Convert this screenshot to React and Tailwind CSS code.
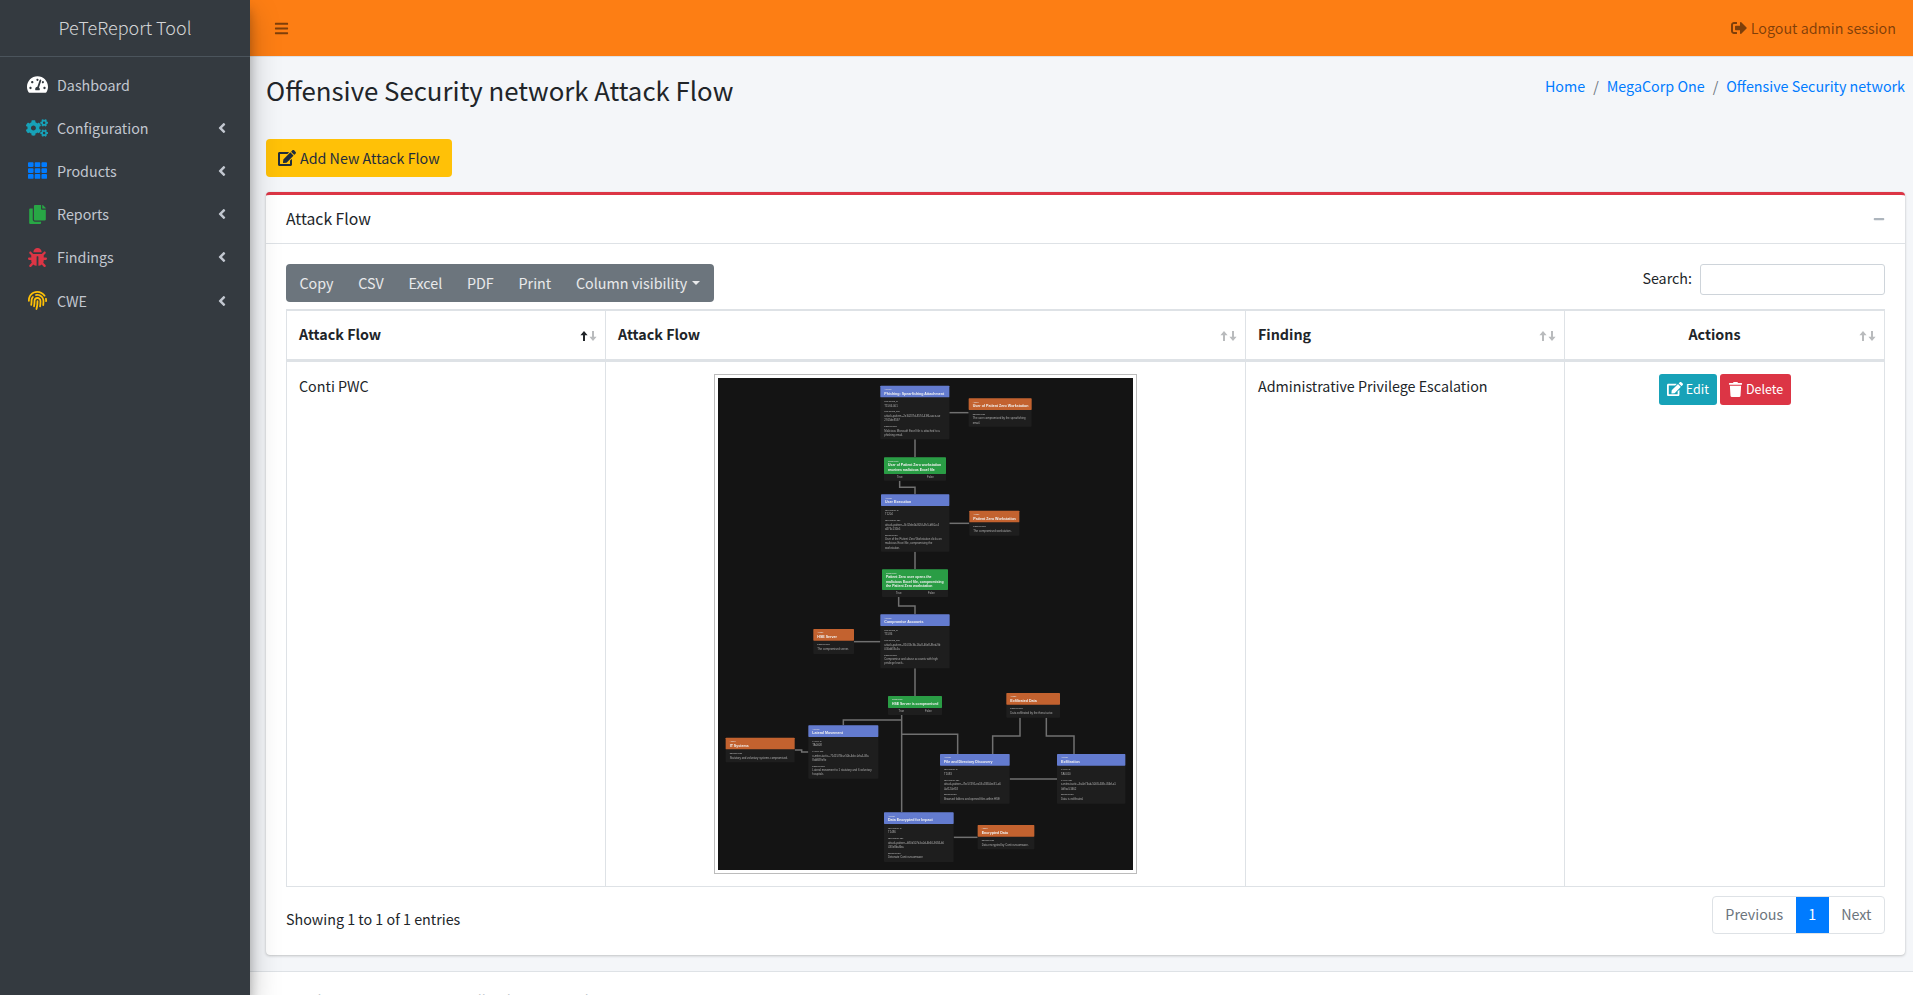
import {
  FaTachometerAlt,
  FaCogs,
  FaTh,
  FaCopy,
  FaBug,
  FaFingerprint,
  FaAngleLeft,
  FaBars,
  FaSignOutAlt,
  FaEdit,
  FaTrash,
  FaMinus,
} from "react-icons/fa";

const navItems = [
  { label: "Dashboard", icon: FaTachometerAlt, color: "text-white", size: "text-[21px]" },
  { label: "Configuration", icon: FaCogs, color: "text-[#17a2b8]", size: "text-[22px]", sub: true },
  { label: "Products", icon: FaTh, color: "text-[#007bff]", size: "text-[19px]", sub: true },
  { label: "Reports", icon: FaCopy, color: "text-[#28a745]", size: "text-[19px]", sub: true },
  { label: "Findings", icon: FaBug, color: "text-[#dc3545]", size: "text-[19px]", sub: true },
  { label: "CWE", icon: FaFingerprint, color: "text-[#ffc107]", size: "text-[19px]", sub: true },
];

const tableColumns = [
  { label: "Attack Flow", width: "w-[319px]", active: true },
  { label: "Attack Flow", width: "w-[640px]" },
  { label: "Finding", width: "w-[319px]" },
  { label: "Actions", center: true },
];

const flowNodes = [
  {
    kind: "ACTION", x: 511, y: 47, w: 207, h: 161, title: "Phishing: Spearfishing Attachment",
    fields: [
      ["TECHNIQUE_ID", ["T1566.001"]],
      ["TECHNIQUE_REF", ["attack-pattern--2e34237d-8574-43f6-aace-ae", "2915de8597"]],
      ["DESCRIPTION", ["Malicious Microsoft Excel file is attached to a", "phishing email."]],
    ],
  },
  {
    kind: "ASSET", x: 776, y: 85, w: 189, h: 85, title: "User of Patient Zero Workstation",
    fields: [["DESCRIPTION", ["The user compromised by the spearfishing", "email."]]],
  },
  {
    kind: "ACTION", x: 513, y: 373, w: 205, h: 172, title: "User Execution",
    fields: [
      ["TECHNIQUE_ID", ["T1204"]],
      ["TECHNIQUE_REF", ["attack-pattern--8c32eb4d-805f-4fc5-bf60-c4", "d476c131b5"]],
      ["DESCRIPTION", ["User of the Patient Zero Workstation clicks on", "malicious Excel file, compromising the", "workstation."]],
    ],
  },
  {
    kind: "ASSET", x: 778, y: 422, w: 150, h: 75, title: "Patient Zero Workstation",
    fields: [["DESCRIPTION", ["The compromised workstation."]]],
  },
  {
    kind: "ACTION", x: 511, y: 733, w: 208, h: 162, title: "Compromise Accounts",
    fields: [
      ["TECHNIQUE_ID", ["T1586"]],
      ["TECHNIQUE_REF", ["attack-pattern--81033c3b-16a8-46e8-8fed-9b", "030dd33c4a"]],
      ["DESCRIPTION", ["Compromise and abuse accounts with high", "privilege levels."]],
    ],
  },
  {
    kind: "ASSET", x: 310, y: 777, w: 122, h: 75, title: "HSE Server",
    fields: [["DESCRIPTION", ["The compromised server."]]],
  },
  {
    kind: "ASSET", x: 889, y: 969, w: 161, h: 74, title: "Exfiltrated Data",
    fields: [["DESCRIPTION", ["Data exfiltrated by the threat actor."]]],
  },
  {
    kind: "ACTION", x: 295, y: 1066, w: 210, h: 160, title: "Lateral Movement",
    fields: [
      ["TACTIC_ID", ["TA0008"]],
      ["TACTIC_REF", ["x-mitre-tactic--7141578b-e50b-4dcc-bfa4-08a", "8dd689e9e"]],
      ["DESCRIPTION", ["Lateral movement to 1 statutory and 6 voluntary", "hospitals"]],
    ],
  },
  {
    kind: "ASSET", x: 47, y: 1103, w: 207, h: 74, title: "IT Systems",
    fields: [["DESCRIPTION", ["Statutory and voluntary systems compromised."]]],
  },
  {
    kind: "ACTION", x: 690, y: 1152, w: 209, h: 149, title: "File and Directory Discovery",
    fields: [
      ["TECHNIQUE_ID", ["T1083"]],
      ["TECHNIQUE_REF", ["attack-pattern--7bc57495-ea59-4380-be31-a6", "4af124ef18"]],
      ["DESCRIPTION", ["Browsed folders and opened files within HSE"]],
    ],
  },
  {
    kind: "ACTION", x: 1041, y: 1152, w: 205, h: 149, title: "Exfiltration",
    fields: [
      ["TACTIC_ID", ["TA0010"]],
      ["TACTIC_REF", ["x-mitre-tactic--9a4e74ab-5008-408c-84bf-a1", "0d9ac53462"]],
      ["DESCRIPTION", ["Data is exfiltrated."]],
    ],
  },
  {
    kind: "ACTION", x: 522, y: 1327, w: 209, h: 149, title: "Data Encrypted for Impact",
    fields: [
      ["TECHNIQUE_ID", ["T1486"]],
      ["TECHNIQUE_REF", ["attack-pattern--b80d107d-fa0d-4b60-9684-b0", "433e8ba6ba"]],
      ["DESCRIPTION", ["Detonate Conti ransomware"]],
    ],
  },
  {
    kind: "ASSET", x: 803, y: 1365, w: 170, h: 73, title: "Encrypted Data",
    fields: [["DESCRIPTION", ["Data encrypted by Conti ransomware."]]],
  },
];

const conditions = [
  { x: 522, y: 262, w: 186, head: 50, h: 70, lines: ["User of Patient Zero workstation", "receives malicious Excel file"], trueX: 569, falseX: 661 },
  { x: 516, y: 598, w: 198, head: 62, h: 83, lines: ["Patient Zero user opens the", "malicious Excel file, compromising", "the Patient Zero workstation"], trueX: 566, falseX: 664 },
  { x: 534, y: 978, w: 162, head: 36, h: 57, lines: ["HSE Server is compromised"], trueX: 574, falseX: 655 },
];

const edges = [
  "M615 208V262",
  "M718 128H776",
  "M569 332V352H615V373",
  "M718 460H778",
  "M615 545V598",
  "M566 681V708H615V733",
  "M511 815H432",
  "M615 895V978",
  "M575 1035V1327",
  "M575 1050H400V1066",
  "M575 1093H743V1152",
  "M848 1152V1098H930V1043",
  "M1092 1152V1098H1009V1043",
  "M899 1227H1041",
  "M295 1146H275V1140H254",
  "M731 1402H803",
];

function FlowNode({ node }) {
  const isAction = node.kind === "ACTION";
  let y = node.y + 47;
  return (
    <g>
      <rect x={node.x} y={node.y} width={node.w} height={node.h} rx="2" fill="#1e1e1e" />
      <rect x={node.x} y={node.y} width={node.w} height="35" rx="2" fill={isAction ? "#637bcf" : "#c3622f"} />
      <text x={node.x + 12} y={node.y + 13} fontSize="5.5" fill="#e5e5e5">{node.kind}</text>
      <text x={node.x + 12} y={node.y + 27} fontSize="10.8" fontWeight="700" fill="#f2f2f2">{node.title}</text>
      {node.fields.map(([label, lines]) => {
        const labelY = y;
        y += 13.5 + lines.length * 12.5 + 5;
        return (
          <g key={label}>
            <text x={node.x + 12} y={labelY + 2} fontSize="5.5" fill="#c0c0c0">{label}</text>
            {lines.map((line, i) => (
              <text key={line} x={node.x + 12} y={labelY + 16 + i * 12.5} fontSize="8.4" fill="#adadad">{line}</text>
            ))}
          </g>
        );
      })}
    </g>
  );
}

function ConditionNode({ node }) {
  return (
    <g>
      <rect x={node.x} y={node.y} width={node.w} height={node.h} rx="2" fill="#1e1e1e" />
      <rect x={node.x} y={node.y} width={node.w} height={node.head} rx="2" fill="#2a9d45" />
      <text x={node.x + 12} y={node.y + 13} fontSize="5.5" fill="#e5e5e5">CONDITION</text>
      {node.lines.map((line, i) => (
        <text key={line} x={node.x + 12} y={node.y + 27 + i * 13.5} fontSize="10.4" fontWeight="700" fill="#f2f2f2">{line}</text>
      ))}
      <text x={node.trueX} y={node.y + node.head + 12} textAnchor="middle" fontSize="8.2" fill="#b0b0b0">True</text>
      <text x={node.falseX} y={node.y + node.head + 12} textAnchor="middle" fontSize="8.2" fill="#b0b0b0">False</text>
    </g>
  );
}

function AttackFlowDiagram() {
  return (
    <div className="w-[415px] h-[492px] bg-[#141414] overflow-hidden">
      <svg viewBox="24 24 1245 1476" className="block w-[415px] h-[492px] blur-[0.5px] font-['Liberation_Sans',sans-serif]">
        {edges.map((d) => (
          <path key={d} d={d} fill="none" stroke="#707070" strokeWidth="4.5" />
        ))}
        {flowNodes.map((node) => (
          <FlowNode key={node.title} node={node} />
        ))}
        {conditions.map((node) => (
          <ConditionNode key={node.lines[0]} node={node} />
        ))}
      </svg>
    </div>
  );
}

function Sidebar() {
  return (
    <aside className="w-[250px] shrink-0 h-screen relative z-10 bg-[#343a40] shadow-[0_14px_28px_rgba(0,0,0,0.25),0_10px_10px_rgba(0,0,0,0.22)]">
      <div className="h-[57px] flex items-center justify-center border-b border-[#4b545c] text-[18px] leading-[30px] font-light text-[rgba(255,255,255,0.8)] pb-[2px]">
        PeTeReport Tool
      </div>
      <nav className="pt-[6px] flex flex-col">
        {navItems.map((item) => {
          const Icon = item.icon;
          return (
            <div key={item.label} className="h-[43.2px] flex items-center pl-[22px] pr-[20px] text-[#c2c7d0] text-[14.3px] leading-[24px]">
              <span className={`w-[35px] pr-[5px] flex justify-center ${item.color} ${item.size}`}>
                <Icon />
              </span>
              <span className="flex-1">{item.label}</span>
              {item.sub && <FaAngleLeft className="text-[16px]" />}
            </div>
          );
        })}
      </nav>
    </aside>
  );
}

function Topbar() {
  return (
    <header className="h-[57px] shrink-0 bg-[#fd7e14] border-b border-[#dee2e6] flex items-center justify-between pl-[24px] pr-[17px] text-[rgba(0,0,0,0.5)] text-[14.3px] leading-[24px]">
      <FaBars className="text-[15px]" />
      <div className="flex items-center gap-[4px]">
        <FaSignOutAlt className="text-[16px]" />
        <span>Logout admin session</span>
      </div>
    </header>
  );
}

function ContentHeader() {
  return (
    <div className="flex justify-between items-start pt-[15px]">
      <h1 className="text-[25.8px] leading-[35px] text-[#212529]">Offensive Security network Attack Flow</h1>
      <div className="flex text-[14.3px] leading-[24px] text-[#007bff] pt-[2px]">
        <span>Home</span>
        <span className="px-[8px] text-[#6c757d]">/</span>
        <span>MegaCorp One</span>
        <span className="px-[8px] text-[#6c757d]">/</span>
        <span>Offensive Security network</span>
      </div>
    </div>
  );
}

function SortArrow({ down, className }) {
  return (
    <svg viewBox="0 0 8 10" className={`w-[8px] h-[10px] fill-current ${down ? "rotate-180" : ""} ${className}`}>
      <path d="M4 0L7.6 4.2H5V10H3V4.2H0.4Z" />
    </svg>
  );
}

function SortArrows({ active }) {
  return (
    <span className="absolute right-[8px] top-[20px] flex gap-[1px]">
      <SortArrow className={active ? "text-[#212529]" : "text-[#b9bbbd]"} />
      <SortArrow down className="text-[#b9bbbd]" />
    </span>
  );
}

function AttackTable() {
  return (
    <table className="w-[1599px] table-fixed border-collapse text-[14.3px] leading-[24px] text-[#212529]">
      <thead>
        <tr>
          {tableColumns.map((col, i) => (
            <th
              key={i}
              className={`${col.width || ""} ${col.center ? "text-center pr-[32px]" : "text-left"} relative h-[50px] pl-[12px] pb-[2px] font-bold border border-[#dee2e6] border-t-2 border-b-[3px]`}
            >
              {col.label}
              <SortArrows active={col.active} />
            </th>
          ))}
        </tr>
      </thead>
      <tbody>
        <tr className="align-top">
          <td className="p-[12px] border border-[#dee2e6]">Conti PWC</td>
          <td className="p-[12px] border border-[#dee2e6]">
            <div className="mx-auto w-[423px] h-[500px] p-[3px] border border-[#bcbcbc] bg-white">
              <AttackFlowDiagram />
            </div>
          </td>
          <td className="p-[12px] border border-[#dee2e6]">Administrative Privilege Escalation</td>
          <td className="p-[12px] border border-[#dee2e6]">
            <div className="flex justify-center gap-[3px] pl-[1px]">
              <button className="h-[31px] px-[8px] rounded-[3px] bg-[#17a2b8] text-white text-[12.5px] flex items-center gap-[3px]">
                <FaEdit className="text-[16px]" />
                Edit
              </button>
              <button className="h-[31px] px-[8px] rounded-[3px] bg-[#dc3545] text-white text-[12.5px] flex items-center gap-[3px]">
                <FaTrash className="text-[15px]" />
                Delete
              </button>
            </div>
          </td>
        </tr>
      </tbody>
    </table>
  );
}

function AttackCard() {
  return (
    <section className="mt-[15px] bg-white rounded-[4px] border-t-[3px] border-[#dc3545] shadow-[0_0_1px_rgba(0,0,0,0.125),0_1px_3px_rgba(0,0,0,0.2)]">
      <div className="h-[49px] flex items-center justify-between px-[20px] border-b border-[#dee2e6]">
        <h3 className="text-[15.75px] leading-[26px] text-[#212529] pb-[1px]">Attack Flow</h3>
        <FaMinus className="text-[12px] text-[#adb5bd]" />
      </div>
      <div className="px-[20px] pt-[20px] pb-[21px]">
        <div className="flex justify-between mb-[7px]">
          <div className="h-[38px] px-[1px] pb-[1px] flex items-center rounded-[4px] bg-[#6c757d] text-white/85 text-[14.3px] leading-[24px]">
            {["Copy", "CSV", "Excel", "PDF", "Print"].map((label) => (
              <span key={label} className="px-[12.4px]">{label}</span>
            ))}
            <span className="px-[12.4px] flex items-center gap-[5px]">
              Column visibility
              <span className="w-0 h-0 border-x-[4.8px] border-x-transparent border-t-[4.8px] border-t-white/85" />
            </span>
          </div>
          <div className="flex items-start gap-[8px] text-[14.3px] leading-[24px] text-[#212529]">
            <span className="pt-[2px]">Search:</span>
            <input aria-label="Search" className="w-[185px] h-[31px] bg-white rounded-[3px] border border-[#ced4da]" />
          </div>
        </div>
        <AttackTable />
        <div className="flex justify-between mt-[9px]">
          <div className="pt-[11px] text-[14.3px] leading-[24px] text-[#212529]">Showing 1 to 1 of 1 entries</div>
          <div className="h-[38px] flex rounded-[4px] border border-[#dee2e6] text-[14.3px] leading-[24px] text-[#6c757d] overflow-hidden">
            <span className="px-[12.5px] pb-[1px] flex items-center">Previous</span>
            <span className="w-[33px] -my-[1px] pb-[1px] flex items-center justify-center bg-[#007bff] text-white">1</span>
            <span className="px-[12.5px] pb-[1px] flex items-center">Next</span>
          </div>
        </div>
      </div>
    </section>
  );
}

export default function App() {
  return (
    <div className="h-screen overflow-hidden flex bg-[#f4f6f9] font-['Noto_Sans_CJK_SC','Noto_Sans',sans-serif]">
      <Sidebar />
      <main className="flex-1 min-w-0 flex flex-col">
        <Topbar />
        <div className="px-[16px] pr-[8px]">
          <ContentHeader />
          <button className="mt-[32px] h-[38px] px-[12px] pb-[1px] rounded-[4px] bg-[#ffc107] text-[#1f2d3d] text-[14.3px] leading-[24px] flex items-center gap-[4px]">
            <FaEdit className="text-[18px]" />
            Add New Attack Flow
          </button>
          <AttackCard />
        </div>
        <footer className="mt-[16px] h-[60px] shrink-0 flex justify-between bg-white border-t border-[#dee2e6] pt-[16px] px-[16px] text-[14.3px] leading-[24px] text-[#869099]">
          <span>Copyright © 2023 PeTeReport. All rights reserved.</span>
          <span>Version 1.0.0</span>
        </footer>
      </main>
    </div>
  );
}
